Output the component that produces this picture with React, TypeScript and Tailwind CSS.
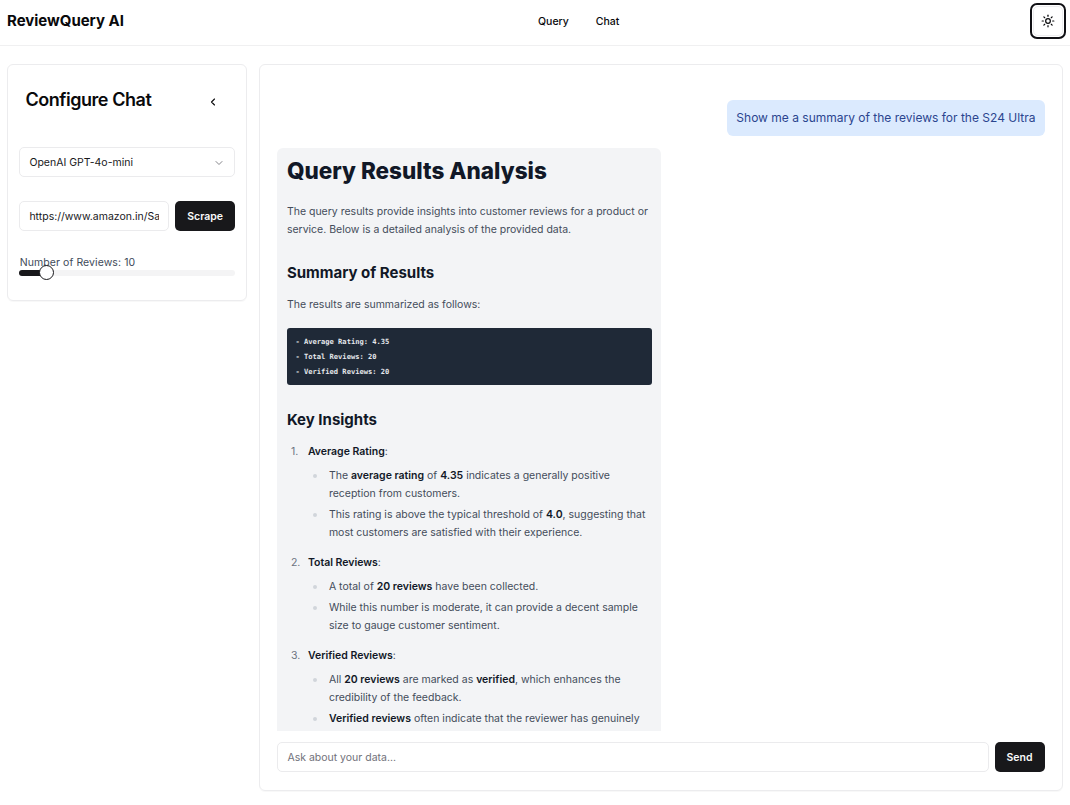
import type { ReactNode } from "react";
import { ChevronDown, ChevronLeft, Sun } from "lucide-react";

function Header() {
  return (
    <header className="flex h-[46px] shrink-0 items-start justify-between border-b border-[#f0f0f1] pr-[4px] pl-[7px]">
      <h1 className="mt-[10px] w-[531px] text-[15px] leading-[21px] font-bold tracking-[-0.02px]">ReviewQuery AI</h1>
      <nav className="mt-[14px] flex flex-1 gap-[27px] text-[10.5px] leading-[16px] font-medium">
        <a>Query</a>
        <a>Chat</a>
      </nav>
      <button className="mt-[3px] flex size-[36px] items-center justify-center rounded-[7px] border-2 border-[#101014] bg-white">
        <span className="flex size-[30px] items-center justify-center rounded-[5px] border border-[#ededef]">
          <Sun size={14} strokeWidth={2.1} />
        </span>
      </button>
    </header>
  );
}

function Sidebar() {
  return (
    <aside className="h-[237px] w-[240px] shrink-0 rounded-[6px] border border-[#ececee] pr-[12px] pl-[11.4px] shadow-[0_1px_1px_rgba(0,0,0,0.03)]">
      <div className="mt-[23px] flex h-[24px] items-center justify-between pr-[15px] pl-[6px]">
        <h2 className="text-[18px] leading-[24px] font-semibold tracking-[-0.45px]">Configure Chat</h2>
        <ChevronLeft size={12} strokeWidth={2.2} className="mt-[4px]" />
      </div>
      <div className="mt-[35px] flex h-[30px] w-[215.5px] items-center justify-between rounded-[5px] border border-[#ebebed] px-[9px] pt-px text-[10.5px] text-[#18181b]">
        <span>OpenAI GPT-4o-mini</span>
        <ChevronDown size={12} className="text-[#85858a]" />
      </div>
      <div className="mt-[24px] flex w-[215.5px] gap-[6px]">
        <div className="flex h-[30px] w-[150px] items-center rounded-[5px] border border-[#ebebed] px-[9px] pt-[2px] text-[10.5px] text-[#18181b]">
          <span className="overflow-hidden whitespace-nowrap">https://www.amazon.in/Sa</span>
        </div>
        <button className="h-[30px] flex-1 rounded-[5px] bg-[#18181b] pt-[2px] text-[10.5px] font-semibold text-[#fafafa]">Scrape</button>
      </div>
      <div className="mt-[24px] pl-[0.3px] text-[10.5px] leading-[15px] tracking-[0.08px] text-[#414b5a]">Number of Reviews: 10</div>
      <div className="h-[6px] w-[215.5px] rounded-full bg-[#f4f4f5]">
        <div className="relative h-[6px] w-[27px] rounded-l-full bg-[#18181b]">
          <span className="absolute -top-[5px] left-[20px] size-[15px] rounded-full border-[1.5px] border-[#18181b] bg-white" />
        </div>
      </div>
    </aside>
  );
}

function B({ children }: { children: ReactNode }) {
  return <strong className="font-semibold text-[#111827]">{children}</strong>;
}

function Bullet({ children }: { children: ReactNode }) {
  return (
    <li className="flex">
      <span className="mt-[7px] mr-[12px] ml-[5px] size-[4px] shrink-0 rounded-full bg-[#d1d5db]" />
      <span>{children}</span>
    </li>
  );
}

function Insight({ n, title, children }: { n: number; title: string; children: ReactNode }) {
  return (
    <li className="flex">
      <span className="w-[21px] shrink-0 pl-[4px] text-[#6b7280]">{n}.</span>
      <div className="flex-1">
        <p>
          <B>{title}</B>:
        </p>
        <ul className="mt-[6px] flex flex-col gap-[3px]">{children}</ul>
      </div>
    </li>
  );
}

function Answer() {
  return (
    <article className="mt-[12px] h-[583px] w-[383.5px] shrink-0 overflow-hidden rounded-t-[6px] bg-[#f3f4f6] pr-[9px] pl-[9.5px] text-[10.5px] leading-[18px] text-[#434c5a]">
      <h1 className="mt-[9px] text-[22.5px] leading-[27px] font-extrabold text-[#111827]">Query Results Analysis</h1>
      <p className="mt-[19px]">
        The query results provide insights into customer reviews for a product or service. Below is a detailed analysis of the provided data.
      </p>
      <h2 className="mt-[23px] text-[15px] leading-[21px] font-bold text-[#111827]">Summary of Results</h2>
      <p className="mt-[13px]">The results are summarized as follows:</p>
      <pre className="mt-[14px] h-[57px] rounded-[3px] bg-[#1f2937] pt-[6px] pl-[8.5px] font-['DejaVu_Sans_Mono',monospace] text-[7.1px] leading-[15px] font-semibold text-[#e5e7eb]">
        {"- Average Rating: 4.35\n- Total Reviews: 20\n- Verified Reviews: 20"}
      </pre>
      <h2 className="mt-[24px] text-[15px] leading-[21px] font-bold text-[#111827]">Key Insights</h2>
      <ol className="mt-[13px] flex flex-col gap-[12px]">
        <Insight n={1} title="Average Rating">
          <Bullet>The <B>average rating</B> of <B>4.35</B> indicates a generally positive reception from customers.</Bullet>
          <Bullet>This rating is above the typical threshold of <B>4.0</B>, suggesting that most customers are satisfied with their experience.</Bullet>
        </Insight>
        <Insight n={2} title="Total Reviews">
          <Bullet>A total of <B>20 reviews</B> have been collected.</Bullet>
          <Bullet>While this number is moderate, it can provide a decent sample size to gauge customer sentiment.</Bullet>
        </Insight>
        <Insight n={3} title="Verified Reviews">
          <Bullet>All <B>20 reviews</B> are marked as <B>verified</B>, which enhances the credibility of the feedback.</Bullet>
          <Bullet><B>Verified reviews</B> often indicate that the reviewer has genuinely</Bullet>
        </Insight>
      </ol>
    </article>
  );
}

export default function App() {
  return (
    <div className="flex h-[805px] w-[1070px] flex-col overflow-hidden bg-white font-['Inter',sans-serif] text-[#09090b]">
      <Header />
      <main className="mt-[18px] flex items-start gap-[12px] pl-[7px]">
        <Sidebar />
        <section className="flex h-[727px] w-[804px] flex-col rounded-[6px] border border-[#ececee] pr-[17.5px] pl-[17.4px] shadow-[0_1px_1px_rgba(0,0,0,0.03)]">
          <div className="mt-[35px] flex h-[36px] shrink-0 items-center self-end rounded-[6px] bg-[#dbeafe] px-[9px] text-[12px] text-[#2b458f]">
            Show me a summary of the reviews for the S24 Ultra
          </div>
          <Answer />
          <div className="mt-[11px] flex gap-[6px]">
            <div className="flex h-[30px] flex-1 items-center rounded-[5px] border border-[#ebebed] px-[9px] pt-[2px] text-[10.5px] text-[#71717a]">
              Ask about your data...
            </div>
            <button className="h-[30px] w-[50px] rounded-[5px] bg-[#18181b] pt-[2px] text-[10.5px] font-semibold text-[#fafafa]">Send</button>
          </div>
        </section>
      </main>
    </div>
  );
}
